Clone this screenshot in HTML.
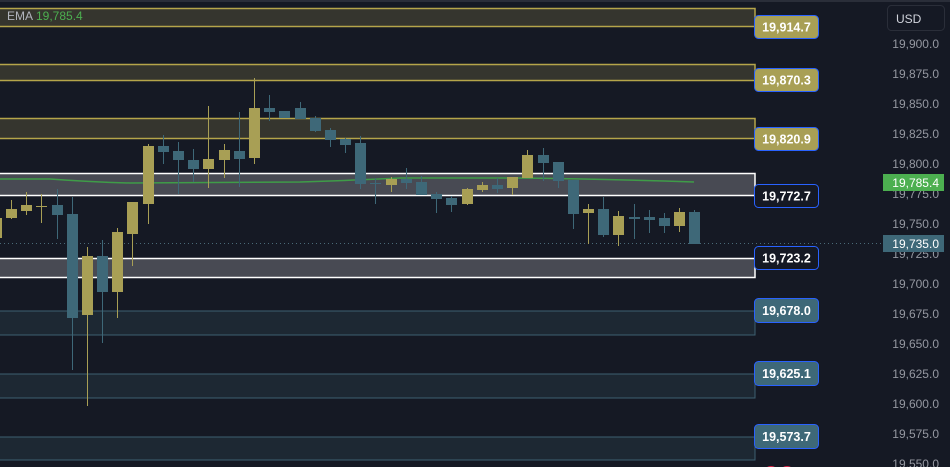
<!DOCTYPE html>
<html><head><meta charset="utf-8"><style>
html,body{margin:0;padding:0;background:#151924;width:950px;height:467px;overflow:hidden;font-family:"Liberation Sans",sans-serif}
svg{display:block}
</style></head><body>
<svg width="950" height="467" xmlns="http://www.w3.org/2000/svg" font-family="Liberation Sans, sans-serif">
<rect width="950" height="467" fill="#151924"/>
<rect width="950" height="2" fill="#2a2e39"/>
<!-- zones -->
<g stroke-width="1.5">
<rect x="-2" y="8.5" width="757" height="18" fill="#35352e" stroke="#b5a54a"/>
<rect x="-2" y="64.5" width="757" height="16" fill="#35352e" stroke="#b5a54a"/>
<rect x="-2" y="118.5" width="757" height="20" fill="#35352e" stroke="#b5a54a"/>
<rect x="-2" y="173.5" width="757" height="22" fill="#484a53" stroke="#ffffff"/>
<rect x="-2" y="258.5" width="757" height="19" fill="#484a53" stroke="#ffffff"/>
<rect x="-2" y="311" width="757" height="24" fill="#1d2833" stroke="#3d6070" stroke-width="1"/>
<rect x="-2" y="374" width="757" height="24" fill="#1d2833" stroke="#3d6070" stroke-width="1"/>
<rect x="-2" y="437" width="757" height="23" fill="#1d2833" stroke="#3d6070" stroke-width="1"/>
</g>
<line x1="0" y1="243.5" x2="882" y2="243.5" stroke="#4a6a78" stroke-dasharray="1,3"/>
<!-- EMA -->
<path d="M0 179 L50 179 Q90 182 130 183 L300 182 Q360 180 400 178 L520 178 Q600 179 694 182" fill="none" stroke="#3f9c48" stroke-width="1.5"/>
<!-- candles -->
<g stroke-width="1">
<!-- yellow -->
<g fill="#a89f55" stroke="#a89f55">
<rect x="-4" y="218" width="6" height="20" stroke="none"/>
<line x1="11.5" y1="200" x2="11.5" y2="219"/><rect x="6" y="209" width="11" height="9" stroke="none"/>
<line x1="26.5" y1="192" x2="26.5" y2="215"/><rect x="21" y="205" width="11" height="6" stroke="none"/>
<line x1="41.5" y1="194" x2="41.5" y2="223"/><rect x="36" y="206" width="11" height="1" stroke="none"/>
<line x1="87.5" y1="247" x2="87.5" y2="406"/><rect x="82" y="256" width="11" height="59" stroke="none"/>
<line x1="117.5" y1="228" x2="117.5" y2="318"/><rect x="112" y="232" width="11" height="60" stroke="none"/>
<line x1="132.5" y1="202" x2="132.5" y2="266"/><rect x="127" y="202" width="11" height="32" stroke="none"/>
<line x1="148.5" y1="144" x2="148.5" y2="224"/><rect x="143" y="146" width="11" height="58" stroke="none"/>
<line x1="208.5" y1="106" x2="208.5" y2="188"/><rect x="203" y="159" width="11" height="10" stroke="none"/>
<line x1="224.5" y1="144" x2="224.5" y2="178"/><rect x="219" y="150" width="11" height="10" stroke="none"/>
<line x1="254.5" y1="78" x2="254.5" y2="164"/><rect x="249" y="108" width="11" height="50" stroke="none"/>
<line x1="391.5" y1="177" x2="391.5" y2="192"/><rect x="386" y="179" width="11" height="6" stroke="none"/>
<line x1="467.5" y1="188" x2="467.5" y2="205"/><rect x="462" y="189" width="11" height="15" stroke="none"/>
<line x1="482.5" y1="182" x2="482.5" y2="192"/><rect x="477" y="185" width="11" height="5" stroke="none"/>
<line x1="512.5" y1="177" x2="512.5" y2="195"/><rect x="507" y="177" width="11" height="11" stroke="none"/>
<line x1="527.5" y1="150" x2="527.5" y2="178"/><rect x="522" y="155" width="11" height="23" stroke="none"/>
<line x1="588.5" y1="204" x2="588.5" y2="244"/><rect x="583" y="209" width="11" height="4" stroke="none"/>
<line x1="618.5" y1="211" x2="618.5" y2="246"/><rect x="613" y="216" width="11" height="19" stroke="none"/>
<line x1="679.5" y1="208" x2="679.5" y2="232"/><rect x="674" y="212" width="11" height="14" stroke="none"/>
</g>
<g fill="#3e6878" stroke="#3e6878">
<line x1="57.5" y1="189" x2="57.5" y2="239"/><rect x="52" y="205" width="11" height="10" stroke="none"/>
<line x1="72.5" y1="197" x2="72.5" y2="370"/><rect x="67" y="214" width="11" height="104" stroke="none"/>
<line x1="102.5" y1="240" x2="102.5" y2="343"/><rect x="97" y="256" width="11" height="36" stroke="none"/>
<line x1="163.5" y1="135" x2="163.5" y2="164"/><rect x="158" y="146" width="11" height="6" stroke="none"/>
<line x1="178.5" y1="142" x2="178.5" y2="194"/><rect x="173" y="151" width="11" height="9" stroke="none"/>
<line x1="193.5" y1="149" x2="193.5" y2="182"/><rect x="188" y="160" width="11" height="9" stroke="none"/>
<line x1="239.5" y1="112" x2="239.5" y2="187"/><rect x="234" y="151" width="11" height="8" stroke="none"/>
<line x1="269.5" y1="95" x2="269.5" y2="121"/><rect x="264" y="108" width="11" height="4" stroke="none"/>
<line x1="284.5" y1="111" x2="284.5" y2="118"/><rect x="279" y="111" width="11" height="7" stroke="none"/>
<line x1="300.5" y1="102" x2="300.5" y2="119"/><rect x="295" y="108" width="11" height="11" stroke="none"/>
<line x1="315.5" y1="116" x2="315.5" y2="132"/><rect x="310" y="118" width="11" height="13" stroke="none"/>
<line x1="330.5" y1="128" x2="330.5" y2="147"/><rect x="325" y="130" width="11" height="10" stroke="none"/>
<line x1="345.5" y1="138" x2="345.5" y2="153"/><rect x="340" y="139" width="11" height="6" stroke="none"/>
<line x1="360.5" y1="136" x2="360.5" y2="189"/><rect x="355" y="143" width="11" height="41" stroke="none"/>
<line x1="375.5" y1="178" x2="375.5" y2="204"/><rect x="370" y="183" width="11" height="1" stroke="none"/>
<line x1="406.5" y1="168" x2="406.5" y2="189"/><rect x="401" y="179" width="11" height="4" stroke="none"/>
<line x1="421.5" y1="176" x2="421.5" y2="195"/><rect x="416" y="182" width="11" height="13" stroke="none"/>
<line x1="436.5" y1="192" x2="436.5" y2="213"/><rect x="431" y="194" width="11" height="5" stroke="none"/>
<line x1="451.5" y1="196" x2="451.5" y2="212"/><rect x="446" y="198" width="11" height="7" stroke="none"/>
<line x1="497.5" y1="178" x2="497.5" y2="193"/><rect x="492" y="185" width="11" height="4" stroke="none"/>
<line x1="543.5" y1="148" x2="543.5" y2="181"/><rect x="538" y="155" width="11" height="8" stroke="none"/>
<line x1="558.5" y1="162" x2="558.5" y2="188"/><rect x="553" y="162" width="11" height="19" stroke="none"/>
<line x1="573.5" y1="180" x2="573.5" y2="229"/><rect x="568" y="180" width="11" height="34" stroke="none"/>
<line x1="603.5" y1="197" x2="603.5" y2="237"/><rect x="598" y="209" width="11" height="26" stroke="none"/>
<line x1="634.5" y1="204" x2="634.5" y2="239"/><rect x="629" y="217" width="11" height="2" stroke="none"/>
<line x1="649.5" y1="210" x2="649.5" y2="233"/><rect x="644" y="217" width="11" height="3" stroke="none"/>
<line x1="664.5" y1="213" x2="664.5" y2="233"/><rect x="659" y="218" width="11" height="8" stroke="none"/>
<line x1="694.5" y1="210" x2="694.5" y2="244"/><rect x="689" y="212" width="11" height="32" stroke="none"/>
</g>
</g>
<!-- EMA legend -->
<text x="7" y="20" font-size="12" fill="#b2b5be">EMA</text>
<text x="36" y="20" font-size="12" fill="#4caf50">19,785.4</text>
<!-- labels -->
<g font-size="12.5" font-weight="bold" text-anchor="middle" stroke-width="1">
<rect x="754.5" y="15.5" width="64" height="23" rx="4" fill="#a89f55" stroke="#2962ff"/><text x="786.5" y="31.5" fill="#fff">19,914.7</text>
<rect x="754.5" y="68.5" width="64" height="23" rx="4" fill="#a89f55" stroke="#2962ff"/><text x="786.5" y="84.5" fill="#fff">19,870.3</text>
<rect x="754.5" y="127.5" width="64" height="23" rx="4" fill="#a89f55" stroke="#2962ff"/><text x="786.5" y="143.5" fill="#fff">19,820.9</text>
<rect x="754.5" y="184.5" width="64" height="23" rx="4" fill="#151924" stroke="#2962ff"/><text x="786.5" y="200.5" fill="#fff">19,772.7</text>
<rect x="754.5" y="246.5" width="64" height="23" rx="4" fill="#151924" stroke="#2962ff"/><text x="786.5" y="262.5" fill="#fff">19,723.2</text>
<rect x="754.5" y="298.5" width="64" height="24" rx="4" fill="#3e6878" stroke="#2962ff"/><text x="786.5" y="315" fill="#fff">19,678.0</text>
<rect x="754.5" y="361.5" width="64" height="24" rx="4" fill="#3e6878" stroke="#2962ff"/><text x="786.5" y="378" fill="#fff">19,625.1</text>
<rect x="754.5" y="424.5" width="64" height="24" rx="4" fill="#3e6878" stroke="#2962ff"/><text x="786.5" y="441" fill="#fff">19,573.7</text>
</g>
<circle cx="771" cy="474" r="8" fill="#e0284a"/><circle cx="787" cy="474" r="8" fill="#e0284a"/>
<!-- axis -->
<rect x="887.5" y="5.5" width="57" height="25" rx="4" fill="#151924" stroke="#2a2e39"/>
<text x="896" y="23" font-size="12" fill="#d1d4dc">USD</text>
<g font-size="12" fill="#9598a1" text-anchor="end">
<text x="939" y="48">19,900.0</text>
<text x="939" y="78">19,875.0</text>
<text x="939" y="108">19,850.0</text>
<text x="939" y="138">19,825.0</text>
<text x="939" y="168">19,800.0</text>
<text x="939" y="198">19,775.0</text>
<text x="939" y="228">19,750.0</text>
<text x="939" y="258">19,725.0</text>
<text x="939" y="288">19,700.0</text>
<text x="939" y="318">19,675.0</text>
<text x="939" y="348">19,650.0</text>
<text x="939" y="378">19,625.0</text>
<text x="939" y="408">19,600.0</text>
<text x="939" y="438">19,575.0</text>
<text x="939" y="468">19,550.0</text>
</g>
<rect x="883" y="174" width="61" height="17" fill="#4caf50"/>
<text x="939" y="187" font-size="12" fill="#fff" text-anchor="end">19,785.4</text>
<rect x="883" y="235" width="61" height="17" fill="#3e6878"/>
<text x="939" y="248" font-size="12" fill="#fff" text-anchor="end">19,735.0</text>
</svg>
</body></html>
